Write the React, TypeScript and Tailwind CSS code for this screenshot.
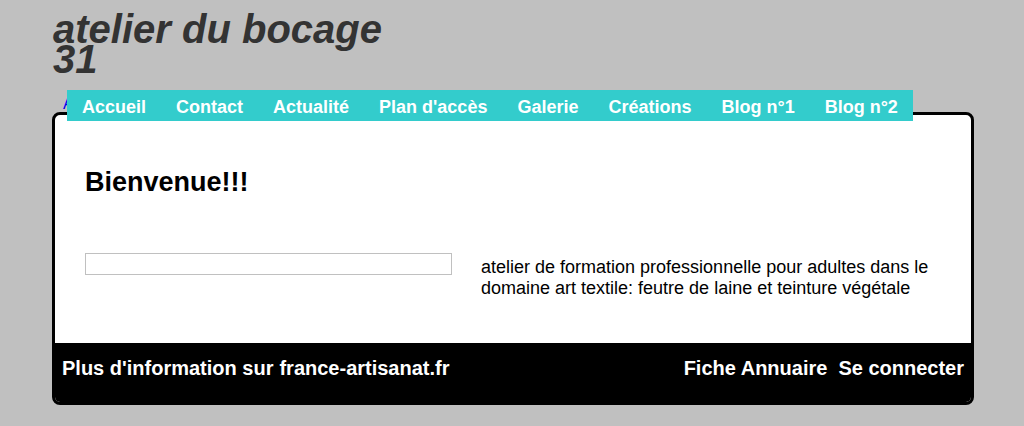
const navItems = ['Accueil', 'Contact', 'Actualité', "Plan d'accès", 'Galerie', 'Créations', 'Blog n°1', 'Blog n°2'];

export default function App() {
  return (
    <div className="min-h-[426px] bg-[#c0c0c0] font-['Liberation_Sans',Arial,sans-serif]">
      <div className="ml-[52px] w-[922px] pt-[14px]">
        <h1 className="ml-px w-[350px] text-[40px] leading-[30px] font-bold italic text-[#333333]">
          atelier du bocage 31
        </h1>

        <div className="relative z-10 mt-4 -mb-[9px] ml-[15px] flex">
          <span className="absolute -left-[4px] top-[2px] text-[16px] text-[#0000ee]">A</span>
          <nav className="relative flex h-[31px] items-center bg-[#33cccc] px-[15px] pt-[3px]">
            <ul className="flex gap-[30px]">
              {navItems.map((item) => (
                <li key={item}>
                  <a href="#" className="text-[18px] font-bold text-white">
                    {item}
                  </a>
                </li>
              ))}
            </ul>
          </nav>
        </div>

        <div className="overflow-hidden rounded-lg border-[3px] border-black bg-white">
          <div className="px-[30px] pt-[52px] pb-[44px]">
            <h2 className="text-[27px] leading-[30px] font-bold text-black">Bienvenue!!!</h2>
            <div className="mt-[56px] flex gap-[29px]">
              <div className="h-[22px] w-[367px] shrink-0 border border-[#c0c0c0]" />
              <p className="pt-[4px] text-[18px] leading-[21px] text-black">
                atelier de formation professionnelle pour adultes dans le domaine art textile: feutre de laine et teinture végétale
              </p>
            </div>
          </div>
          <footer className="flex h-[59px] items-center justify-between bg-black px-[7px] pb-[10px] text-[20px] font-bold text-white">
            <div className="flex gap-[6px]">
              <span>Plus d'information sur</span>
              <a href="#">france-artisanat.fr</a>
            </div>
            <div className="flex gap-[11px]">
              <a href="#">Fiche Annuaire</a>
              <a href="#">Se connecter</a>
            </div>
          </footer>
        </div>
      </div>
    </div>
  );
}
